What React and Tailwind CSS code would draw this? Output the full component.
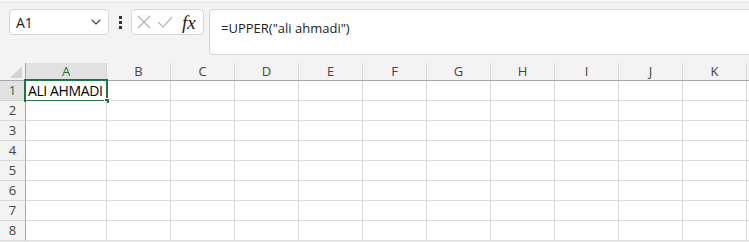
import { ChevronDown } from 'lucide-react';

const columnas = ['B', 'C', 'D', 'E', 'F', 'G', 'H', 'I', 'J', 'K'];
const filas = [1, 2, 3, 4, 5, 6, 7, 8];

// Barra de fórmulas
const BarraFormula = () => (
  <div className="flex items-start pl-[9px] pt-[6px] h-[60px]">
    <div className="w-[100px] h-[26px] bg-white border border-[#d6d6d6] rounded-[4px] flex items-center justify-between pl-[6px] pr-[4px]">
      <span className="text-[14px] text-[#222]">A1</span>
      <ChevronDown size={16} strokeWidth={1.6} className="text-[#444]" />
    </div>
    <div className="w-[22px] h-[26px] flex flex-col items-center justify-center gap-[2px]">
      <span className="w-[3px] h-[3px] bg-[#333]"></span>
      <span className="w-[3px] h-[3px] bg-[#333]"></span>
      <span className="w-[3px] h-[3px] bg-[#333]"></span>
    </div>
    <div className="w-[73px] h-[26px] bg-white border border-[#d6d6d6] rounded-[4px] flex items-center pl-[5px] gap-[6px]">
      <svg width="14" height="14" viewBox="0 0 14 14" fill="none" stroke="#b4b4b4" strokeWidth="1.2">
        <path d="M1 1 L13 13 M13 1 L1 13" />
      </svg>
      <svg width="16" height="14" viewBox="0 0 16 14" fill="none" stroke="#b4b4b4" strokeWidth="1.2">
        <path d="M1 7 L6 12 L15 2" />
      </svg>
      <span className="ml-[3px] text-[19px] italic text-[#222] font-['Liberation_Serif',serif] leading-none">fx</span>
    </div>
    <div className="ml-[5px] flex-1 h-[46px] bg-white border border-[#d6d6d6] rounded-l-[4px] border-r-0 pl-[11px] pt-[5px]">
      <span className="text-[13px] text-[#222]">=UPPER("ali ahmadi")</span>
    </div>
  </div>
);

const Hoja = () => (
  <div className="flex flex-col">
    {/* Encabezados de columnas */}
    <div className="flex h-[18px] border-b border-[#a6a6a6]">
      <div className="w-[26px] shrink-0 border-r border-[#a6a6a6] flex items-end justify-end pr-[3px] pb-[2px]">
        <svg width="12" height="12" viewBox="0 0 12 12">
          <path d="M12 0 L12 12 L0 12 Z" fill="#d4d4d4" />
        </svg>
      </div>
      <div className="w-[81px] shrink-0 bg-[#e1e1e1] border-r border-[#d4d4d4] flex items-center justify-center text-[13px] text-[#1e7145]">
        A
      </div>
      {columnas.map((c) => (
        <div
          key={c}
          className="w-[64px] shrink-0 border-r border-[#d8d8d8] flex items-center justify-center text-[13px] text-[#444]"
        >
          {c}
        </div>
      ))}
      <div className="flex-1"></div>
    </div>

    {/* Filas */}
    {filas.map((f) => (
      <div key={f} className="flex h-[20px]">
        <div
          className={`w-[26px] shrink-0 border-r border-b border-r-[#a6a6a6] flex items-center justify-center text-[13px] ${
            f === 1 ? 'bg-[#e1e1e1] text-[#1e7145] border-b-[#d4d4d4]' : 'text-[#444] border-b-[#d8d8d8]'
          }`}
        >
          {f}
        </div>
        <div className="relative w-[81px] shrink-0 bg-white border-r border-b border-[#dadada]">
          {f === 1 && (
            <div className="absolute -left-[2px] -top-[2px] w-[84px] h-[23px] border-2 border-[#217346] flex items-center pl-[2px] text-[14px] tracking-[-0.4px] font-medium text-black whitespace-nowrap">
              ALI AHMADI
              <span className="absolute -right-[4px] -bottom-[4px] w-[6px] h-[6px] bg-[#217346] border border-white"></span>
            </div>
          )}
        </div>
        {columnas.map((c) => (
          <div key={c} className="w-[64px] shrink-0 bg-white border-r border-b border-[#dadada]"></div>
        ))}
        <div className="flex-1 bg-white border-b border-[#dadada]"></div>
      </div>
    ))}
  </div>
);

export default function App() {
  return (
    <div className="w-[749px] h-[242px] overflow-hidden bg-[#f3f3f3] font-['Open_Sans',sans-serif]">
      <div className="h-[3px] bg-gradient-to-b from-white to-[#e4e4e4]"></div>
      <BarraFormula />
      <Hoja />
    </div>
  );
}
